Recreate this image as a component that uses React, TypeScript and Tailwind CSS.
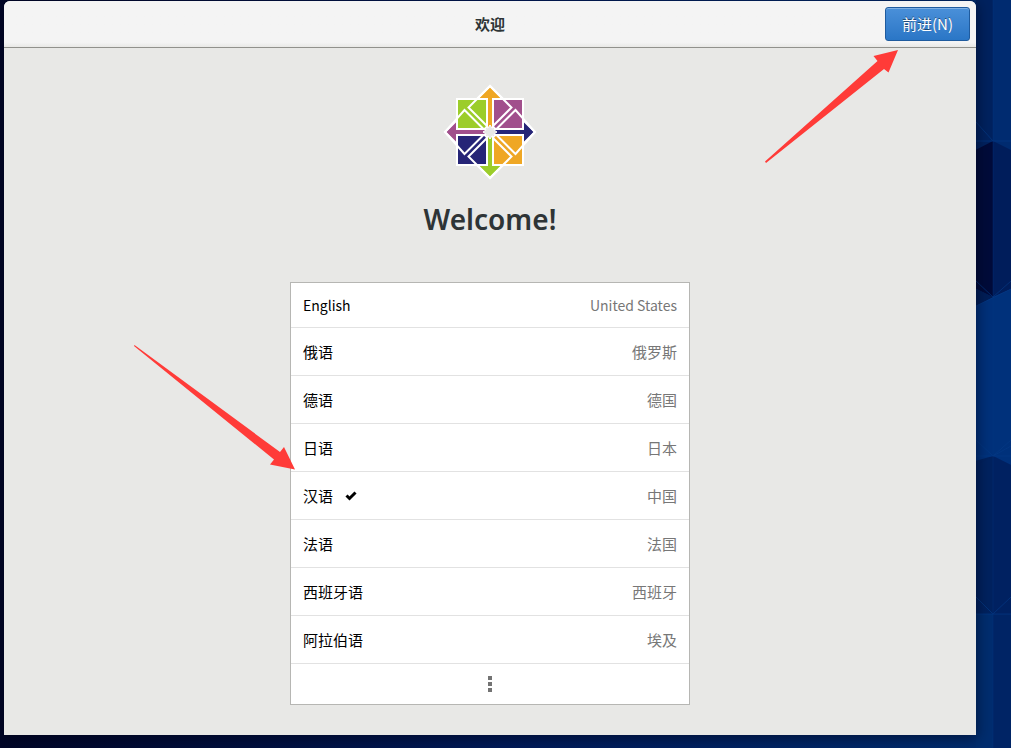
import { useState } from "react";

const languages = [
  { name: "English", region: "United States" },
  { name: "俄语", region: "俄罗斯" },
  { name: "德语", region: "德国" },
  { name: "日语", region: "日本" },
  { name: "汉语", region: "中国" },
  { name: "法语", region: "法国" },
  { name: "西班牙语", region: "西班牙" },
  { name: "阿拉伯语", region: "埃及" },
];

function Wallpaper() {
  return (
    <svg className="absolute right-0 top-0 h-[748px] w-[35px]" viewBox="16 0 35 748" aria-hidden="true">
      <rect width="33" height="748" fill="#00225f" />
      <rect x="33" width="18" height="748" fill="#002b70" />
      <path d="M0 158 33 141V297L0 281Z" fill="#000b3a" />
      <path d="M33 141 51 150V289L33 297Z" fill="#001d5b" />
      <path d="M0 314 33 297 51 289V465L33 456 0 465Z" fill="#00317b" />
      <path d="M0 281 33 297 0 314Z" fill="#001e58" />
      <path d="M0 473 33 456V614L0 598Z" fill="#00225f" />
      <path d="M33 456 51 465V614H33Z" fill="#002161" />
      <path d="M0 614H33V748H0Z" fill="#002d6f" />
      <path d="M33 614H51V748H33Z" fill="#002465" />
      <g fill="none" stroke="#063b87" opacity=".65">
        <path d="M33 0V748" opacity=".5" />
        <path d="M16 122 33 141H51M16 141H33M16 281 33 297 51 281M16 306 51 289M16 440 33 456 51 440M33 456 51 446M16 456H51M16 597 33 614 51 597M16 614H51" />
      </g>
    </svg>
  );
}

function CentosLogo() {
  return (
    <svg className="h-[110px] w-[110px]" viewBox="0 0 110 110" role="img" aria-label="CentOS">
      <g stroke="#fff" strokeWidth="2">
        <path d="M55 11 77 33 55 57 33 33Z" fill="#efa724" />
        <path d="M100 57 78 79 55 57 78 35Z" fill="#262577" />
        <path d="M55 103 33 81 55 57 77 81Z" fill="#9ccd2a" />
        <path d="M10 57 32 35 55 57 32 79Z" fill="#a14f8c" />
        <path d="M22 24H52V54H22Z" fill="#9ccd2a" />
        <path d="M58 24H88V54H58Z" fill="#a14f8c" />
        <path d="M22 60H52V90H22Z" fill="#262577" />
        <path d="M58 60H88V90H58Z" fill="#efa724" />
        <path
          d="M52 51 33.500 32.500 55 11 76.500 32.500 58 51M61.500 54 80.500 35 100 57 80.500 79 61.500 60M58 63 76.500 81.500 55 103 33.500 81.500 52 63M48.500 60 29.500 79 10 57 29.500 35 48.500 54"
          fill="none"
        />
      </g>
      <path
        d="M55 50 57 53 60 52 59 55 62 57 59 59 60 62 57 61 55 64 53 61 50 62 51 59 48 57 51 55 50 52 53 53Z"
        fill="#e8e8e6"
        stroke="#fff"
      />
    </svg>
  );
}

function Check() {
  return (
    <svg className="h-3 w-3" viewBox="0 0 12 12" aria-hidden="true">
      <path d="M1.500 5.500 4.500 8.500 10.500 2.500" fill="none" stroke="#000" strokeWidth="3" />
    </svg>
  );
}

export default function App() {
  const [selected, setSelected] = useState("汉语");

  return (
    <div className="relative flex min-h-screen bg-gradient-to-r from-[#000628] via-[#001a58] to-[#002d6f] pt-px pr-[35px] pb-[13px] pl-1 font-['Noto_Sans_CJK_SC',sans-serif] text-[15px] leading-6">
      <Wallpaper />
      <main className="relative flex min-w-0 flex-1 flex-col rounded-t-md bg-[#e8e8e6] shadow-[0_2px_14px_1px_rgba(0,0,15,0.5)]">
        <header className="grid h-[47px] grid-cols-[1fr_auto_1fr] items-center rounded-t-md border-b border-[#91918c] bg-gradient-to-b from-[#f4f4f4] from-90% to-[#e8e8e6] px-1.5">
          <h1 className="col-start-2 font-bold text-[#2e3436]">欢迎</h1>
          <button
            type="button"
            className="h-[34px] justify-self-end rounded-[3px] border border-[#1f5b9e] bg-gradient-to-b from-[#4a90d9] to-[#2a76c6] px-4 text-white shadow-[inset_0_1px_0_rgba(255,255,255,0.3)] [text-shadow:0_-1px_0_rgba(0,0,0,0.45)]"
          >
            前进(N)
          </button>
        </header>

        <section className="flex flex-1 flex-col items-center px-4 pt-[27px] pb-[30px]">
          <CentosLogo />
          <h2 className="mt-3.5 mb-[43px] font-['Noto_Sans',sans-serif] text-[28px] leading-10 font-semibold text-[#2e3436]">
            Welcome!
          </h2>
          <div className="w-full max-w-[400px] border border-[#b6b6b3] bg-white">
            <ul>
              {languages.map(({ name, region }) => (
                <li key={name} className="border-b border-[#e2e2e2]">
                  <button
                    type="button"
                    aria-pressed={selected === name}
                    onClick={() => setSelected(name)}
                    className={`flex w-full items-center px-3 text-left ${name === "English" ? "h-11 text-sm" : "h-[47px]"}`}
                  >
                    <span className="mr-3 text-black">{name}</span>
                    {selected === name && <Check />}
                    <span className="ml-auto text-[#777]">{region}</span>
                  </button>
                </li>
              ))}
            </ul>
            <button type="button" aria-label="More languages" className="flex h-10 w-full flex-col items-center justify-center gap-0.5">
              <span className="size-1 bg-[#737373]" />
              <span className="size-1 bg-[#737373]" />
              <span className="size-1 bg-[#737373]" />
            </button>
          </div>
        </section>
      </main>

      <svg className="pointer-events-none absolute top-[50px] right-[113px] h-[113px] w-[133px]" viewBox="0 0 133 113" aria-hidden="true">
        <path d="M133 0 108.500 6 112.500 11 0 111.500 1 113 119 19 123.500 22.500Z" fill="#ff3b38" />
      </svg>
      <svg className="pointer-events-none absolute top-[345px] left-[134px] h-[125px] w-[161px]" viewBox="0 0 161 125" aria-hidden="true">
        <path d="M161 124.500 150 102 146 107 .5 0 0 1 140 114.500 136 119.500Z" fill="#ff3b38" />
      </svg>
    </div>
  );
}
